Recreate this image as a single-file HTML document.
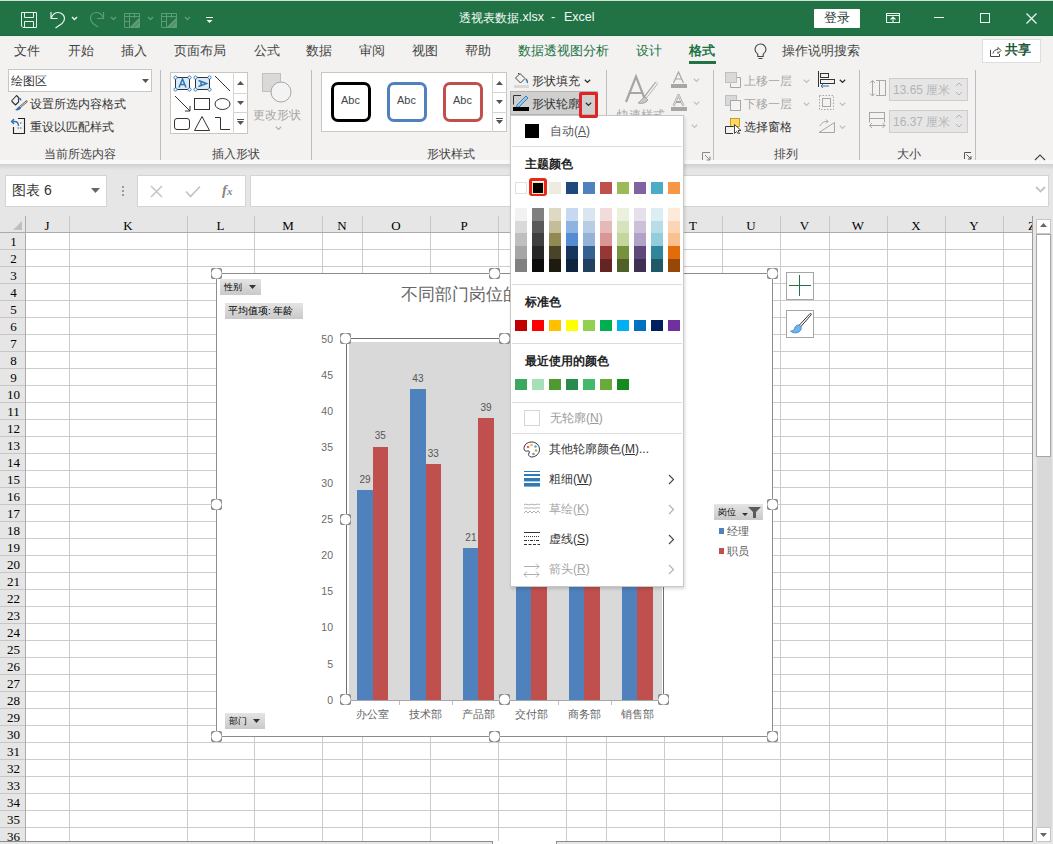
<!DOCTYPE html>
<html><head><meta charset="utf-8"><title>Excel</title><style>*{margin:0;padding:0;box-sizing:border-box}
html,body{width:1053px;height:844px;overflow:hidden}
body{position:relative;font-family:"Liberation Sans",sans-serif;background:#fff}
.a{position:absolute}
.t{white-space:nowrap;line-height:1.2}
.hd{height:16px;text-align:center;font-family:"Liberation Serif",serif;font-size:13px;line-height:12px;color:#000}
.rh{width:25px;height:14px;text-align:center;font-family:"Liberation Serif",serif;font-size:13px;line-height:14px;color:#000}
.yl{width:33px;text-align:right;font-size:10.5px;line-height:12px;color:#6a6a6a}
.dl{width:30px;text-align:center;font-size:10px;line-height:12px;color:#555}
.xl{width:52px;text-align:center;font-size:10.5px;line-height:12px;color:#666;white-space:nowrap}
</style></head><body>
<div class="a" style="left:0px;top:0px;width:1053px;height:1px;background:#cfe3d6"></div>
<div class="a" style="left:0px;top:1px;width:1053px;height:35px;background:#217346"></div>
<div class="a" style="left:0px;top:35px;width:1053px;height:1px;background:#1d6a3f"></div>
<svg class="a" style="left:21px;top:12px;" width="16" height="16" viewBox="0 0 16 16"><path d="M0.5 0.5H15.5V15.5H2L0.5 14Z M3.5 0.5V5.5H12.5V0.5 M3.5 15.5V9.5H12.5V15.5" fill="none" stroke="#eaf5ee" stroke-width="1"/></svg>
<svg class="a" style="left:49px;top:11px;" width="18" height="18" viewBox="0 0 18 18"><path d="M2 1V7.5H8.5 M2.5 6.5C4 3 6.5 1.5 9 1.5C12.5 1.5 15.5 4 15.5 7.5C15.5 9.5 14.5 11 13 12.5L6.5 17" fill="none" stroke="#eaf5ee" stroke-width="1.2"/></svg>
<svg class="a" style="left:71px;top:16px;" width="8" height="5" viewBox="0 0 8 5"><path d="M1 1L3.5 3.5L6 1" fill="none" stroke="#eaf5ee" stroke-width="1.4"/></svg>
<svg class="a" style="left:88px;top:11px;" width="18" height="18" viewBox="0 0 18 18"><path d="M15.5 1V7.5H9 M15 6.5C13.5 3 11 1.5 8.5 1.5C5 1.5 2.5 4 2.5 7.5C2.5 9.5 3.5 11 5 12.5L10 16" fill="none" stroke="#5e9c78" stroke-width="1.2"/></svg>
<svg class="a" style="left:110px;top:16px;" width="8" height="5" viewBox="0 0 8 5"><path d="M1 1L3.5 3.5L6 1" fill="none" stroke="#5e9c78" stroke-width="1.4"/></svg>
<svg class="a" style="left:124px;top:12px;" width="17" height="17" viewBox="0 0 17 17"><path d="M0.5 1.5H15.5V15.5H0.5Z M0.5 4.5H15.5 M0.5 9.5H5.5 M5.5 1.5V15.5 M10.5 1.5V6" fill="none" stroke="#5e9c78" stroke-width="1"/><path d="M6 15L15 6V15Z" fill="#5e9c78"/><path d="M7.5 13.5L13.5 7.5 M10 15L15 10" stroke="#3f8a5e" stroke-width="1"/></svg>
<svg class="a" style="left:147px;top:16px;" width="8" height="5" viewBox="0 0 8 5"><path d="M1 1L3.5 3.5L6 1" fill="none" stroke="#5e9c78" stroke-width="1.4"/></svg>
<svg class="a" style="left:161px;top:12px;" width="17" height="17" viewBox="0 0 17 17"><path d="M0.5 1.5H15.5V15.5H0.5Z M0.5 4.5H15.5 M0.5 9.5H5.5 M5.5 1.5V15.5 M10.5 1.5V6" fill="none" stroke="#5e9c78" stroke-width="1"/><path d="M6 15L15 6V15Z" fill="#5e9c78"/><path d="M7.5 13.5L13.5 7.5 M10 15L15 10" stroke="#3f8a5e" stroke-width="1"/></svg>
<svg class="a" style="left:184px;top:16px;" width="8" height="5" viewBox="0 0 8 5"><path d="M1 1L3.5 3.5L6 1" fill="none" stroke="#5e9c78" stroke-width="1.4"/></svg>
<svg class="a" style="left:206px;top:16px;" width="8" height="8" viewBox="0 0 8 8"><path d="M0 1.5H7" stroke="#eaf5ee" stroke-width="1"/><path d="M0.5 4H6.5L3.5 7Z" fill="#eaf5ee"/></svg>
<div class="a t" style="left:459px;top:11px;font-size:12px;color:#f4faf6;">透视表数据</div>
<div class="a t" style="left:519px;top:10px;font-size:12.5px;color:#f4faf6;">.xlsx</div>
<div class="a t" style="left:551px;top:10px;font-size:12.5px;color:#f4faf6;">-</div>
<div class="a t" style="left:564px;top:10px;font-size:12.5px;color:#f4faf6;">Excel</div>
<div class="a" style="left:814px;top:9px;width:46px;height:19px;background:#fff;border-radius:1px"></div>
<div class="a t" style="left:824px;top:10px;font-size:13px;color:#2b3d33;">登录</div>
<svg class="a" style="left:886px;top:12px;" width="14" height="12" viewBox="0 0 14 12"><path d="M0.5 1.5H13.5V10.5H0.5Z M0.5 3.5H13.5" fill="none" stroke="#eaf5ee" stroke-width="1.1"/><path d="M7 10V5 M4.5 7.5L7 5L9.5 7.5" fill="none" stroke="#eaf5ee" stroke-width="1.1"/></svg>
<div class="a" style="left:934px;top:17px;width:10px;height:1px;background:#eaf5ee"></div>
<svg class="a" style="left:980px;top:13px;" width="11" height="11" viewBox="0 0 11 11"><rect x="0.5" y="0.5" width="9" height="9" fill="none" stroke="#eaf5ee"/></svg>
<svg class="a" style="left:1026px;top:13px;" width="11" height="11" viewBox="0 0 11 11"><path d="M0.5 0.5L10.5 10.5 M10.5 0.5L0.5 10.5" stroke="#eaf5ee" stroke-width="1.25"/></svg>
<div class="a" style="left:0px;top:36px;width:1053px;height:125px;background:#f3f2f1"></div>
<div class="a" style="left:0px;top:36px;width:1053px;height:1px;background:#e8f2ec"></div>
<div class="a" style="left:0px;top:160px;width:1053px;height:4px;background:#f8f8f8"></div>
<div class="a t" style="left:14px;top:43px;font-size:13px;color:#444;">文件</div>
<div class="a t" style="left:68px;top:43px;font-size:13px;color:#444;">开始</div>
<div class="a t" style="left:121px;top:43px;font-size:13px;color:#444;">插入</div>
<div class="a t" style="left:174px;top:43px;font-size:13px;color:#444;">页面布局</div>
<div class="a t" style="left:254px;top:43px;font-size:13px;color:#444;">公式</div>
<div class="a t" style="left:306px;top:43px;font-size:13px;color:#444;">数据</div>
<div class="a t" style="left:359px;top:43px;font-size:13px;color:#444;">审阅</div>
<div class="a t" style="left:412px;top:43px;font-size:13px;color:#444;">视图</div>
<div class="a t" style="left:465px;top:43px;font-size:13px;color:#444;">帮助</div>
<div class="a t" style="left:518px;top:43px;font-size:13px;color:#217346;">数据透视图分析</div>
<div class="a t" style="left:636px;top:43px;font-size:13px;color:#217346;">设计</div>
<div class="a t" style="left:689px;top:43px;font-size:13px;color:#217346;font-weight:bold">格式</div>
<div class="a" style="left:689px;top:61px;width:27px;height:3px;background:#217346"></div>
<svg class="a" style="left:754px;top:43px;" width="13" height="17" viewBox="0 0 13 17"><path d="M6.5 1C3.5 1 1 3.4 1 6.5C1 8.5 2.2 9.8 3.8 11.2V13.5H9.2V11.2C10.8 9.8 12 8.5 12 6.5C12 3.4 9.5 1 6.5 1Z M4.5 15.5H8.5" fill="none" stroke="#444" stroke-width="1.1"/></svg>
<div class="a t" style="left:782px;top:43px;font-size:13px;color:#444;">操作说明搜索</div>
<div class="a" style="left:982px;top:39px;width:59px;height:24px;background:#fff;border:1px solid #dedede"></div>
<svg class="a" style="left:990px;top:46px;" width="12" height="11" viewBox="0 0 12 11"><path d="M0.5 4V10.5H9.5V8 M3 7.5C3.5 4.5 5.5 3.5 8 3.5V1.5L11 4.5L8 7.5V5.5" fill="none" stroke="#444" stroke-width="1"/></svg>
<div class="a t" style="left:1005px;top:42px;font-size:13px;color:#24573a;font-weight:bold">共享</div>
<div class="a" style="left:8px;top:69px;width:144px;height:23px;background:#fff;border:1px solid #c6c6c6"></div>
<div class="a t" style="left:11px;top:74px;font-size:12px;color:#333;">绘图区</div>
<svg class="a" style="left:142px;top:79px;" width="7" height="4" viewBox="0 0 7 4"><path d="M0 0H7L3.5 4Z" fill="#555"/></svg>
<svg class="a" style="left:9px;top:94px;" width="20" height="18" viewBox="0 0 20 18"><path d="M2.5 7L7.5 1.5L9.5 3.5V8 M2.5 7L6.5 11L10 7.5" fill="none" stroke="#333" stroke-width="1.1" stroke-linejoin="round"/><path d="M9.5 5C10.5 4 12 4.5 11.5 6.5" fill="none" stroke="#2e75b6" stroke-width="1.6"/><path d="M17.5 7.5L10.5 13.5" stroke="#555" stroke-width="2.2" stroke-linecap="round"/><path d="M17.5 7.5L10.5 13.5" stroke="#fff" stroke-width="0.8"/><path d="M10.5 12.5C8.5 13 8 15 6 16C8.5 17 11 16 12 14Z" fill="#2e75b6"/></svg>
<div class="a t" style="left:30px;top:97px;font-size:12px;color:#333;">设置所选内容格式</div>
<svg class="a" style="left:9px;top:117px;" width="20" height="18" viewBox="0 0 20 18"><path d="M9 1.5H15.5V16.5H4.5V10" fill="none" stroke="#222" stroke-width="1.1"/><path d="M11 6H12.5 M8.5 11H10 M11 11H12.5" stroke="#555" stroke-width="1"/><path d="M9.5 9C9.5 6 8 4.5 5.5 4.5H2.5 M5 2L2.5 4.5L5 7" fill="none" stroke="#2e75b6" stroke-width="1.3"/></svg>
<div class="a t" style="left:30px;top:120px;font-size:12px;color:#333;">重设以匹配样式</div>
<div class="a t" style="left:44px;top:147px;font-size:12px;color:#444;">当前所选内容</div>
<div class="a" style="left:160px;top:70px;width:1px;height:90px;background:#bdbdbd"></div>
<div class="a" style="left:170px;top:72px;width:78px;height:62px;background:#fff;border:1px solid #c6c6c6"></div>
<div class="a" style="left:233px;top:72px;width:1px;height:62px;background:#d4d4d4"></div>
<div class="a" style="left:233px;top:93px;width:15px;height:1px;background:#d4d4d4"></div>
<div class="a" style="left:233px;top:112px;width:15px;height:1px;background:#d4d4d4"></div>
<svg class="a" style="left:237px;top:81px;" width="7" height="4" viewBox="0 0 7 4"><path d="M0 4H7L3.5 0Z" fill="#555"/></svg>
<svg class="a" style="left:237px;top:101px;" width="7" height="4" viewBox="0 0 7 4"><path d="M0 0H7L3.5 4Z" fill="#555"/></svg>
<svg class="a" style="left:237px;top:119px;" width="7" height="6" viewBox="0 0 7 6"><path d="M0 0.5H7" stroke="#555"/><path d="M0 2H7L3.5 6Z" fill="#555"/></svg>
<svg class="a" style="left:170px;top:68px;" width="64" height="66" viewBox="0 0 64 66"><rect x="5.5" y="9.5" width="14" height="12" fill="#dcebf7" stroke="#333"/><circle cx="5.5" cy="9.5" r="1.6" fill="#fff" stroke="#2e75b6" stroke-width="0.9"/><circle cx="19.5" cy="9.5" r="1.6" fill="#fff" stroke="#2e75b6" stroke-width="0.9"/><circle cx="5.5" cy="21.5" r="1.6" fill="#fff" stroke="#2e75b6" stroke-width="0.9"/><circle cx="19.5" cy="21.5" r="1.6" fill="#fff" stroke="#2e75b6" stroke-width="0.9"/><path d="M9 19.5L12.5 11L16 19.5 M10.2 16.5H14.8" fill="none" stroke="#2e75b6" stroke-width="1.5"/><rect x="25.5" y="9.5" width="14" height="12" fill="#dcebf7" stroke="#333"/><circle cx="25.5" cy="9.5" r="1.6" fill="#fff" stroke="#2e75b6" stroke-width="0.9"/><circle cx="39.5" cy="9.5" r="1.6" fill="#fff" stroke="#2e75b6" stroke-width="0.9"/><circle cx="25.5" cy="21.5" r="1.6" fill="#fff" stroke="#2e75b6" stroke-width="0.9"/><circle cx="39.5" cy="21.5" r="1.6" fill="#fff" stroke="#2e75b6" stroke-width="0.9"/><path d="M28.5 12.5L36.5 15.5L28.5 18.5 M31 13.5V17.5" fill="none" stroke="#2e75b6" stroke-width="1.5"/><path d="M45 8L60 23" stroke="#333" stroke-width="1"/><path d="M5 28L20 43 M20 43V38 M20 43H15" fill="none" stroke="#333" stroke-width="1"/><rect x="24.5" y="30.5" width="15" height="11" fill="none" stroke="#333"/><ellipse cx="52.5" cy="36" rx="7.5" ry="5.5" fill="none" stroke="#333"/><rect x="4.5" y="50.5" width="15" height="11" rx="2.5" fill="none" stroke="#333"/><path d="M32 48.5L39.5 62.5H24.5Z" fill="none" stroke="#333"/><path d="M45 49.5H50.5V61.5H60" fill="none" stroke="#333"/></svg>
<svg class="a" style="left:262px;top:73px;" width="30" height="32" viewBox="0 0 30 32"><rect x="0.5" y="0.5" width="18" height="18" fill="#d9d9d9" stroke="#bfbfbf"/><circle cx="19" cy="19" r="10" fill="#f3f3f3" stroke="#a6a6a6"/></svg>
<div class="a t" style="left:253px;top:108px;font-size:12px;color:#a6a6a6;">更改形状</div>
<svg class="a" style="left:275px;top:126px;" width="7" height="4" viewBox="0 0 7 4"><path d="M0.8 0.8L3.5 3.4L6.2 0.8" fill="none" stroke="#b0b0b0" stroke-width="1.2"/></svg>
<div class="a t" style="left:212px;top:147px;font-size:12px;color:#444;">插入形状</div>
<div class="a" style="left:311px;top:70px;width:1px;height:90px;background:#bdbdbd"></div>
<div class="a" style="left:321px;top:72px;width:186px;height:60px;background:#fff;border:1px solid #c6c6c6"></div>
<div class="a" style="left:492px;top:72px;width:1px;height:60px;background:#d4d4d4"></div>
<div class="a" style="left:492px;top:92px;width:15px;height:1px;background:#d4d4d4"></div>
<div class="a" style="left:492px;top:112px;width:15px;height:1px;background:#d4d4d4"></div>
<svg class="a" style="left:496px;top:81px;" width="7" height="4" viewBox="0 0 7 4"><path d="M0 4H7L3.5 0Z" fill="#555"/></svg>
<svg class="a" style="left:496px;top:100px;" width="7" height="4" viewBox="0 0 7 4"><path d="M0 0H7L3.5 4Z" fill="#555"/></svg>
<svg class="a" style="left:496px;top:118px;" width="7" height="6" viewBox="0 0 7 6"><path d="M0 0.5H7" stroke="#555"/><path d="M0 2H7L3.5 6Z" fill="#555"/></svg>
<div class="a" style="left:331px;top:82px;width:40px;height:40px;border:3px solid #000;border-radius:7px;background:#fff"></div>
<div class="a t" style="left:341px;top:94px;font-size:11px;color:#444;">Abc</div>
<div class="a" style="left:387px;top:82px;width:40px;height:40px;border:3px solid #4f81bd;border-radius:7px;background:#fff"></div>
<div class="a t" style="left:397px;top:94px;font-size:11px;color:#444;">Abc</div>
<div class="a" style="left:443px;top:82px;width:40px;height:40px;border:3px solid #c0504d;border-radius:7px;background:#fff"></div>
<div class="a t" style="left:453px;top:94px;font-size:11px;color:#444;">Abc</div>
<div class="a t" style="left:427px;top:147px;font-size:12px;color:#444;">形状样式</div>
<div class="a" style="left:606px;top:70px;width:1px;height:90px;background:#bdbdbd"></div>
<svg class="a" style="left:514px;top:72px;" width="16" height="16" viewBox="0 0 16 16"><path d="M6 1.5L1.5 6L6.5 11L11 6.5Z" fill="none" stroke="#444"/><path d="M4 1L5.5 2.5" stroke="#444"/><path d="M12 7C13 8.5 14 10 13 11" fill="none" stroke="#2e75b6" stroke-width="1.4"/><rect x="0" y="13" width="15" height="3" fill="#d9d9d9"/></svg>
<div class="a t" style="left:532px;top:74px;font-size:12px;color:#333;">形状填充</div>
<svg class="a" style="left:584px;top:79px;" width="7" height="4" viewBox="0 0 7 4"><path d="M0.8 0.8L3.5 3.4L6.2 0.8" fill="none" stroke="#333" stroke-width="1.3"/></svg>
<div class="a" style="left:510px;top:91px;width:88px;height:24px;background:#cfcfcf;border:1px solid #b4b4b4"></div>
<svg class="a" style="left:512px;top:94px;" width="18" height="18" viewBox="0 0 18 18"><path d="M1.5 10.5V1.5H9" fill="none" stroke="#333"/><path d="M5 11L14 2L16 4L7 13L4.5 13.5Z" fill="#9cc8ee" stroke="#2e75b6" stroke-width="0.9"/><rect x="1" y="13" width="16" height="4" fill="#000"/></svg>
<div class="a t" style="left:532px;top:97px;font-size:12px;color:#333;">形状轮廓</div>
<svg class="a" style="left:585px;top:102px;" width="7" height="4" viewBox="0 0 7 4"><path d="M0.8 0.8L3.5 3.4L6.2 0.8" fill="none" stroke="#333" stroke-width="1.3"/></svg>
<svg class="a" style="left:622px;top:73px;" width="40" height="34" viewBox="0 0 40 34"><path d="M4 29L14 3.5L24 29 M8 20H20" fill="none" stroke="#a6a6a6" stroke-width="2.2"/><path d="M22 26L34 10.5" stroke="#a6a6a6" stroke-width="3.5" stroke-linecap="round"/><path d="M35 9.5L24 24" stroke="#f3f3f3" stroke-width="1.5"/><path d="M23 24C20 25 19 28 16 30C20 31 24 30 26 27Z" fill="#c8c8c8" stroke="#a6a6a6"/></svg>
<div class="a t" style="left:617px;top:108px;font-size:12px;color:#a6a6a6;">快速样式</div>
<svg class="a" style="left:671px;top:71px;" width="17" height="18" viewBox="0 0 17 18"><path d="M2.5 12L7.5 1L12.5 12 M4.5 8H10.5" fill="none" stroke="#a6a6a6" stroke-width="1.2"/><rect x="0" y="13" width="16" height="4" fill="#a6a6a6"/></svg>
<svg class="a" style="left:693px;top:78px;" width="8" height="5" viewBox="0 0 8 5"><path d="M0.8 0.8L3.5 3.4L6.2 0.8" fill="none" stroke="#c0c0c0" stroke-width="1.2"/></svg>
<svg class="a" style="left:671px;top:94px;" width="17" height="18" viewBox="0 0 17 18"><path d="M2.5 12L7.5 1L12.5 12 M4.5 8H10.5" fill="none" stroke="#a6a6a6" stroke-width="2.2"/><path d="M2.5 12L7.5 1L12.5 12" fill="none" stroke="#f3f3f3" stroke-width="0.8"/><rect x="0" y="13" width="16" height="4" fill="#a6a6a6"/></svg>
<svg class="a" style="left:693px;top:101px;" width="8" height="5" viewBox="0 0 8 5"><path d="M0.8 0.8L3.5 3.4L6.2 0.8" fill="none" stroke="#c0c0c0" stroke-width="1.2"/></svg>
<svg class="a" style="left:691px;top:124px;" width="8" height="5" viewBox="0 0 8 5"><path d="M0.8 0.8L3.5 3.4L6.2 0.8" fill="none" stroke="#c0c0c0" stroke-width="1.2"/></svg>
<svg class="a" style="left:702px;top:152px;" width="9" height="9" viewBox="0 0 9 9"><path d="M0.5 8V0.5H8" fill="none" stroke="#888"/><path d="M3 3L8 8 M8 4.5V8H4.5" fill="none" stroke="#888"/></svg>
<div class="a" style="left:713px;top:70px;width:1px;height:90px;background:#bdbdbd"></div>
<svg class="a" style="left:725px;top:72px;" width="17" height="16" viewBox="0 0 17 16"><rect x="0.5" y="0.5" width="11" height="10" fill="#d9d9d9" stroke="#bfbfbf"/><path d="M12 5.5H15.5V15.5H5.5V11.5" fill="none" stroke="#a6a6a6"/></svg>
<div class="a t" style="left:744px;top:74px;font-size:12px;color:#a6a6a6;">上移一层</div>
<svg class="a" style="left:803px;top:79px;" width="7" height="4" viewBox="0 0 7 4"><path d="M0.8 0.8L3.5 3.4L6.2 0.8" fill="none" stroke="#c0c0c0" stroke-width="1.2"/></svg>
<svg class="a" style="left:725px;top:95px;" width="17" height="16" viewBox="0 0 17 16"><rect x="0.5" y="0.5" width="11" height="10" fill="#d9d9d9" stroke="#bfbfbf"/><rect x="5.5" y="5.5" width="10" height="10" fill="#f3f3f3" stroke="#a6a6a6"/></svg>
<div class="a t" style="left:744px;top:97px;font-size:12px;color:#a6a6a6;">下移一层</div>
<svg class="a" style="left:803px;top:102px;" width="7" height="4" viewBox="0 0 7 4"><path d="M0.8 0.8L3.5 3.4L6.2 0.8" fill="none" stroke="#c0c0c0" stroke-width="1.2"/></svg>
<svg class="a" style="left:725px;top:118px;" width="18" height="16" viewBox="0 0 18 16"><rect x="5.5" y="0.5" width="9" height="8" fill="#ffd966" stroke="#bf9000" stroke-width="0.8"/><path d="M8.5 8.5H0.5V15.5H8" fill="none" stroke="#333"/><path d="M9.5 6.5V15.5L11.5 13.5L13.5 16L14.5 15.5L13 12.5H16Z" fill="#fff" stroke="#333" stroke-width="0.9"/></svg>
<div class="a t" style="left:744px;top:120px;font-size:12px;color:#333;">选择窗格</div>
<svg class="a" style="left:818px;top:71px;" width="18" height="17" viewBox="0 0 18 17"><path d="M0.5 0V16" stroke="#333"/><rect x="2.5" y="2.5" width="8" height="4" fill="none" stroke="#333"/><rect x="2.5" y="8.5" width="14" height="4" fill="none" stroke="#333"/><path d="M3 15H11 M3 15L5 13 M3 15L5 17" fill="none" stroke="#2e75b6"/></svg>
<svg class="a" style="left:839px;top:79px;" width="7" height="4" viewBox="0 0 7 4"><path d="M0.8 0.8L3.5 3.4L6.2 0.8" fill="none" stroke="#333" stroke-width="1.3"/></svg>
<svg class="a" style="left:818px;top:94px;" width="18" height="17" viewBox="0 0 18 17"><path d="M1.5 1.5H15.5V15.5H1.5Z" fill="none" stroke="#a6a6a6" stroke-dasharray="1.5 1.5"/><rect x="4.5" y="4.5" width="8" height="8" fill="none" stroke="#a6a6a6"/></svg>
<svg class="a" style="left:839px;top:102px;" width="7" height="4" viewBox="0 0 7 4"><path d="M0.8 0.8L3.5 3.4L6.2 0.8" fill="none" stroke="#c0c0c0" stroke-width="1.2"/></svg>
<svg class="a" style="left:818px;top:117px;" width="18" height="17" viewBox="0 0 18 17"><path d="M1 15.5H16.5V5.5Z" fill="none" stroke="#a6a6a6"/><path d="M2 9C4 5 7 4 10 4.5 M10 4.5L8 2.5 M10 4.5L8 6.5" fill="none" stroke="#a6a6a6"/></svg>
<svg class="a" style="left:839px;top:125px;" width="7" height="4" viewBox="0 0 7 4"><path d="M0.8 0.8L3.5 3.4L6.2 0.8" fill="none" stroke="#c0c0c0" stroke-width="1.2"/></svg>
<div class="a t" style="left:774px;top:147px;font-size:12px;color:#444;">排列</div>
<div class="a" style="left:859px;top:70px;width:1px;height:90px;background:#bdbdbd"></div>
<svg class="a" style="left:869px;top:80px;" width="18" height="17" viewBox="0 0 18 17"><path d="M3.5 0.5V16 M1 3L3.5 0.5L6 3 M1 13.5L3.5 16L6 13.5" fill="none" stroke="#a6a6a6"/><path d="M7 0.5H10.5 M7 15.5H10.5" stroke="#a6a6a6"/><rect x="10.5" y="0.5" width="6" height="15" fill="none" stroke="#a6a6a6"/></svg>
<div class="a" style="left:889px;top:78px;width:79px;height:23px;background:#e6e6e6;border:1px solid #cdcdcd"></div>
<div class="a t" style="left:893px;top:83px;font-size:12px;color:#b4b4b4;">13.65 厘米</div>
<svg class="a" style="left:955px;top:82px;" width="8" height="15" viewBox="0 0 8 15"><path d="M1 4L4 1L7 4 M1 10L4 13L7 10" fill="none" stroke="#b4b4b4"/></svg>
<svg class="a" style="left:869px;top:112px;" width="18" height="17" viewBox="0 0 18 17"><rect x="0.5" y="0.5" width="15" height="6" fill="none" stroke="#a6a6a6"/><path d="M0.5 7V10.5 M15.5 7V10.5" stroke="#a6a6a6"/><path d="M0.5 13.5H16 M3 11L0.5 13.5L3 16 M13.5 11L16 13.5L13.5 16" fill="none" stroke="#a6a6a6"/></svg>
<div class="a" style="left:889px;top:110px;width:79px;height:23px;background:#e6e6e6;border:1px solid #cdcdcd"></div>
<div class="a t" style="left:893px;top:115px;font-size:12px;color:#b4b4b4;">16.37 厘米</div>
<svg class="a" style="left:955px;top:114px;" width="8" height="15" viewBox="0 0 8 15"><path d="M1 4L4 1L7 4 M1 10L4 13L7 10" fill="none" stroke="#b4b4b4"/></svg>
<div class="a t" style="left:897px;top:147px;font-size:12px;color:#444;">大小</div>
<svg class="a" style="left:964px;top:152px;" width="8" height="8" viewBox="0 0 8 8"><path d="M0.5 7V0.5H7" fill="none" stroke="#555"/><path d="M2.5 2.5L7 7 M7 4V7H4" fill="none" stroke="#555"/></svg>
<div class="a" style="left:975px;top:70px;width:1px;height:90px;background:#bdbdbd"></div>
<svg class="a" style="left:1034px;top:154px;" width="12" height="7" viewBox="0 0 12 7"><path d="M1 6L6 1L11 6" fill="none" stroke="#444" stroke-width="1.1"/></svg>
<div class="a" style="left:0px;top:164px;width:1053px;height:52px;background:#e6e6e6"></div>
<div class="a" style="left:0px;top:164px;width:1053px;height:6px;background:linear-gradient(#d0d0d0,#e6e6e6)"></div>
<div class="a" style="left:5px;top:175px;width:102px;height:32px;background:#fff;border:1px solid #d4d4d4"></div>
<div class="a t" style="left:12px;top:182px;font-size:14px;color:#333;">图表 6</div>
<svg class="a" style="left:91px;top:188px;" width="9" height="5" viewBox="0 0 9 5"><path d="M0 0H9L4.5 5Z" fill="#666"/></svg>
<div class="a" style="left:122px;top:186px;width:2px;height:2px;background:#9a9a9a"></div>
<div class="a" style="left:122px;top:190px;width:2px;height:2px;background:#9a9a9a"></div>
<div class="a" style="left:122px;top:194px;width:2px;height:2px;background:#9a9a9a"></div>
<div class="a" style="left:137px;top:175px;width:109px;height:32px;background:#fff;border:1px solid #d4d4d4"></div>
<svg class="a" style="left:150px;top:185px;" width="13" height="13" viewBox="0 0 13 13"><path d="M1 1L12 12 M12 1L1 12" stroke="#c4c4c4" stroke-width="1.5"/></svg>
<svg class="a" style="left:185px;top:185px;" width="16" height="13" viewBox="0 0 16 13"><path d="M1 6.5L5.5 11.5L15 1.5" fill="none" stroke="#c4c4c4" stroke-width="1.8"/></svg>
<div class="a t" style="left:222px;top:181px;font-size:15px;color:#888;font-family:'Liberation Serif',serif;font-weight:bold"><i>f</i><span style="font-size:11px"><i>x</i></span></div>
<div class="a" style="left:250px;top:175px;width:799px;height:32px;background:#fff;border:1px solid #d4d4d4"></div>
<svg class="a" style="left:1035px;top:186px;" width="11" height="7" viewBox="0 0 11 7"><path d="M1 1L5.5 5.5L10 1" fill="none" stroke="#c4c4c4" stroke-width="1.8"/></svg>
<div class="a" style="left:0px;top:216px;width:1035px;height:17px;background:#e6e6e6"></div>
<div class="a" style="left:0px;top:232px;width:1033px;height:1px;background:#ababab"></div>
<svg class="a" style="left:13px;top:221px;" width="9" height="9" viewBox="0 0 9 9"><path d="M9 0V9H0Z" fill="#bfbfbf"/></svg>
<div class="a" style="left:25px;top:216px;width:1px;height:16px;background:#ababab"></div>
<div class="a" style="left:69px;top:216px;width:1px;height:16px;background:#c6c6c6"></div>
<div class="a" style="left:187px;top:216px;width:1px;height:16px;background:#c6c6c6"></div>
<div class="a" style="left:254px;top:216px;width:1px;height:16px;background:#c6c6c6"></div>
<div class="a" style="left:322px;top:216px;width:1px;height:16px;background:#c6c6c6"></div>
<div class="a" style="left:362px;top:216px;width:1px;height:16px;background:#c6c6c6"></div>
<div class="a" style="left:430px;top:216px;width:1px;height:16px;background:#c6c6c6"></div>
<div class="a" style="left:498px;top:216px;width:1px;height:16px;background:#c6c6c6"></div>
<div class="a" style="left:566px;top:216px;width:1px;height:16px;background:#c6c6c6"></div>
<div class="a" style="left:606px;top:216px;width:1px;height:16px;background:#c6c6c6"></div>
<div class="a" style="left:664px;top:216px;width:1px;height:16px;background:#c6c6c6"></div>
<div class="a" style="left:722px;top:216px;width:1px;height:16px;background:#c6c6c6"></div>
<div class="a" style="left:780px;top:216px;width:1px;height:16px;background:#c6c6c6"></div>
<div class="a" style="left:829px;top:216px;width:1px;height:16px;background:#c6c6c6"></div>
<div class="a" style="left:887px;top:216px;width:1px;height:16px;background:#c6c6c6"></div>
<div class="a" style="left:945px;top:216px;width:1px;height:16px;background:#c6c6c6"></div>
<div class="a" style="left:1003px;top:216px;width:1px;height:16px;background:#c6c6c6"></div>
<div class="a" style="left:1032px;top:216px;width:1px;height:16px;background:#c6c6c6"></div>
<div class="a hd" style="left:25px;top:220px;width:44px">J</div>
<div class="a hd" style="left:69px;top:220px;width:118px">K</div>
<div class="a hd" style="left:187px;top:220px;width:67px">L</div>
<div class="a hd" style="left:254px;top:220px;width:68px">M</div>
<div class="a hd" style="left:322px;top:220px;width:40px">N</div>
<div class="a hd" style="left:362px;top:220px;width:68px">O</div>
<div class="a hd" style="left:430px;top:220px;width:68px">P</div>
<div class="a hd" style="left:498px;top:220px;width:68px">Q</div>
<div class="a hd" style="left:566px;top:220px;width:40px">R</div>
<div class="a hd" style="left:606px;top:220px;width:58px">S</div>
<div class="a hd" style="left:664px;top:220px;width:58px">T</div>
<div class="a hd" style="left:722px;top:220px;width:58px">U</div>
<div class="a hd" style="left:780px;top:220px;width:49px">V</div>
<div class="a hd" style="left:829px;top:220px;width:58px">W</div>
<div class="a hd" style="left:887px;top:220px;width:58px">X</div>
<div class="a hd" style="left:945px;top:220px;width:58px">Y</div>
<div class="a hd" style="left:1003px;top:220px;width:58px">Z</div>
<div class="a" style="left:0px;top:233px;width:25px;height:608px;background:#e6e6e6"></div>
<div class="a" style="left:25px;top:216px;width:1px;height:625px;background:#ababab"></div>
<div class="a" style="left:0px;top:249px;width:25px;height:1px;background:#c6c6c6"></div>
<div class="a rh" style="left:1px;top:235px">1</div>
<div class="a" style="left:0px;top:266px;width:25px;height:1px;background:#c6c6c6"></div>
<div class="a rh" style="left:1px;top:252px">2</div>
<div class="a" style="left:0px;top:283px;width:25px;height:1px;background:#c6c6c6"></div>
<div class="a rh" style="left:1px;top:269px">3</div>
<div class="a" style="left:0px;top:300px;width:25px;height:1px;background:#c6c6c6"></div>
<div class="a rh" style="left:1px;top:286px">4</div>
<div class="a" style="left:0px;top:317px;width:25px;height:1px;background:#c6c6c6"></div>
<div class="a rh" style="left:1px;top:303px">5</div>
<div class="a" style="left:0px;top:334px;width:25px;height:1px;background:#c6c6c6"></div>
<div class="a rh" style="left:1px;top:320px">6</div>
<div class="a" style="left:0px;top:351px;width:25px;height:1px;background:#c6c6c6"></div>
<div class="a rh" style="left:1px;top:337px">7</div>
<div class="a" style="left:0px;top:368px;width:25px;height:1px;background:#c6c6c6"></div>
<div class="a rh" style="left:1px;top:354px">8</div>
<div class="a" style="left:0px;top:385px;width:25px;height:1px;background:#c6c6c6"></div>
<div class="a rh" style="left:1px;top:371px">9</div>
<div class="a" style="left:0px;top:402px;width:25px;height:1px;background:#c6c6c6"></div>
<div class="a rh" style="left:1px;top:388px">10</div>
<div class="a" style="left:0px;top:419px;width:25px;height:1px;background:#c6c6c6"></div>
<div class="a rh" style="left:1px;top:405px">11</div>
<div class="a" style="left:0px;top:436px;width:25px;height:1px;background:#c6c6c6"></div>
<div class="a rh" style="left:1px;top:422px">12</div>
<div class="a" style="left:0px;top:453px;width:25px;height:1px;background:#c6c6c6"></div>
<div class="a rh" style="left:1px;top:439px">13</div>
<div class="a" style="left:0px;top:470px;width:25px;height:1px;background:#c6c6c6"></div>
<div class="a rh" style="left:1px;top:456px">14</div>
<div class="a" style="left:0px;top:487px;width:25px;height:1px;background:#c6c6c6"></div>
<div class="a rh" style="left:1px;top:473px">15</div>
<div class="a" style="left:0px;top:504px;width:25px;height:1px;background:#c6c6c6"></div>
<div class="a rh" style="left:1px;top:490px">16</div>
<div class="a" style="left:0px;top:521px;width:25px;height:1px;background:#c6c6c6"></div>
<div class="a rh" style="left:1px;top:507px">17</div>
<div class="a" style="left:0px;top:538px;width:25px;height:1px;background:#c6c6c6"></div>
<div class="a rh" style="left:1px;top:524px">18</div>
<div class="a" style="left:0px;top:555px;width:25px;height:1px;background:#c6c6c6"></div>
<div class="a rh" style="left:1px;top:541px">19</div>
<div class="a" style="left:0px;top:572px;width:25px;height:1px;background:#c6c6c6"></div>
<div class="a rh" style="left:1px;top:558px">20</div>
<div class="a" style="left:0px;top:589px;width:25px;height:1px;background:#c6c6c6"></div>
<div class="a rh" style="left:1px;top:575px">21</div>
<div class="a" style="left:0px;top:606px;width:25px;height:1px;background:#c6c6c6"></div>
<div class="a rh" style="left:1px;top:592px">22</div>
<div class="a" style="left:0px;top:623px;width:25px;height:1px;background:#c6c6c6"></div>
<div class="a rh" style="left:1px;top:609px">23</div>
<div class="a" style="left:0px;top:640px;width:25px;height:1px;background:#c6c6c6"></div>
<div class="a rh" style="left:1px;top:626px">24</div>
<div class="a" style="left:0px;top:657px;width:25px;height:1px;background:#c6c6c6"></div>
<div class="a rh" style="left:1px;top:643px">25</div>
<div class="a" style="left:0px;top:674px;width:25px;height:1px;background:#c6c6c6"></div>
<div class="a rh" style="left:1px;top:660px">26</div>
<div class="a" style="left:0px;top:691px;width:25px;height:1px;background:#c6c6c6"></div>
<div class="a rh" style="left:1px;top:677px">27</div>
<div class="a" style="left:0px;top:708px;width:25px;height:1px;background:#c6c6c6"></div>
<div class="a rh" style="left:1px;top:694px">28</div>
<div class="a" style="left:0px;top:725px;width:25px;height:1px;background:#c6c6c6"></div>
<div class="a rh" style="left:1px;top:711px">29</div>
<div class="a" style="left:0px;top:742px;width:25px;height:1px;background:#c6c6c6"></div>
<div class="a rh" style="left:1px;top:728px">30</div>
<div class="a" style="left:0px;top:759px;width:25px;height:1px;background:#c6c6c6"></div>
<div class="a rh" style="left:1px;top:745px">31</div>
<div class="a" style="left:0px;top:776px;width:25px;height:1px;background:#c6c6c6"></div>
<div class="a rh" style="left:1px;top:762px">32</div>
<div class="a" style="left:0px;top:793px;width:25px;height:1px;background:#c6c6c6"></div>
<div class="a rh" style="left:1px;top:779px">33</div>
<div class="a" style="left:0px;top:810px;width:25px;height:1px;background:#c6c6c6"></div>
<div class="a rh" style="left:1px;top:796px">34</div>
<div class="a" style="left:0px;top:827px;width:25px;height:1px;background:#c6c6c6"></div>
<div class="a rh" style="left:1px;top:813px">35</div>
<div class="a" style="left:0px;top:844px;width:25px;height:1px;background:#c6c6c6"></div>
<div class="a rh" style="left:1px;top:830px">36</div>
<div class="a" style="left:26px;top:233px;width:1006px;height:608px;background:#fff"></div>
<div class="a" style="left:26px;top:249px;width:1006px;height:1px;background:#cccccc"></div>
<div class="a" style="left:26px;top:266px;width:1006px;height:1px;background:#cccccc"></div>
<div class="a" style="left:26px;top:283px;width:1006px;height:1px;background:#cccccc"></div>
<div class="a" style="left:26px;top:300px;width:1006px;height:1px;background:#cccccc"></div>
<div class="a" style="left:26px;top:317px;width:1006px;height:1px;background:#cccccc"></div>
<div class="a" style="left:26px;top:334px;width:1006px;height:1px;background:#cccccc"></div>
<div class="a" style="left:26px;top:351px;width:1006px;height:1px;background:#cccccc"></div>
<div class="a" style="left:26px;top:368px;width:1006px;height:1px;background:#cccccc"></div>
<div class="a" style="left:26px;top:385px;width:1006px;height:1px;background:#cccccc"></div>
<div class="a" style="left:26px;top:402px;width:1006px;height:1px;background:#cccccc"></div>
<div class="a" style="left:26px;top:419px;width:1006px;height:1px;background:#cccccc"></div>
<div class="a" style="left:26px;top:436px;width:1006px;height:1px;background:#cccccc"></div>
<div class="a" style="left:26px;top:453px;width:1006px;height:1px;background:#cccccc"></div>
<div class="a" style="left:26px;top:470px;width:1006px;height:1px;background:#cccccc"></div>
<div class="a" style="left:26px;top:487px;width:1006px;height:1px;background:#cccccc"></div>
<div class="a" style="left:26px;top:504px;width:1006px;height:1px;background:#cccccc"></div>
<div class="a" style="left:26px;top:521px;width:1006px;height:1px;background:#cccccc"></div>
<div class="a" style="left:26px;top:538px;width:1006px;height:1px;background:#cccccc"></div>
<div class="a" style="left:26px;top:555px;width:1006px;height:1px;background:#cccccc"></div>
<div class="a" style="left:26px;top:572px;width:1006px;height:1px;background:#cccccc"></div>
<div class="a" style="left:26px;top:589px;width:1006px;height:1px;background:#cccccc"></div>
<div class="a" style="left:26px;top:606px;width:1006px;height:1px;background:#cccccc"></div>
<div class="a" style="left:26px;top:623px;width:1006px;height:1px;background:#cccccc"></div>
<div class="a" style="left:26px;top:640px;width:1006px;height:1px;background:#cccccc"></div>
<div class="a" style="left:26px;top:657px;width:1006px;height:1px;background:#cccccc"></div>
<div class="a" style="left:26px;top:674px;width:1006px;height:1px;background:#cccccc"></div>
<div class="a" style="left:26px;top:691px;width:1006px;height:1px;background:#cccccc"></div>
<div class="a" style="left:26px;top:708px;width:1006px;height:1px;background:#cccccc"></div>
<div class="a" style="left:26px;top:725px;width:1006px;height:1px;background:#cccccc"></div>
<div class="a" style="left:26px;top:742px;width:1006px;height:1px;background:#cccccc"></div>
<div class="a" style="left:26px;top:759px;width:1006px;height:1px;background:#cccccc"></div>
<div class="a" style="left:26px;top:776px;width:1006px;height:1px;background:#cccccc"></div>
<div class="a" style="left:26px;top:793px;width:1006px;height:1px;background:#cccccc"></div>
<div class="a" style="left:26px;top:810px;width:1006px;height:1px;background:#cccccc"></div>
<div class="a" style="left:26px;top:827px;width:1006px;height:1px;background:#cccccc"></div>
<div class="a" style="left:69px;top:233px;width:1px;height:608px;background:#cccccc"></div>
<div class="a" style="left:187px;top:233px;width:1px;height:608px;background:#cccccc"></div>
<div class="a" style="left:254px;top:233px;width:1px;height:608px;background:#cccccc"></div>
<div class="a" style="left:322px;top:233px;width:1px;height:608px;background:#cccccc"></div>
<div class="a" style="left:362px;top:233px;width:1px;height:608px;background:#cccccc"></div>
<div class="a" style="left:430px;top:233px;width:1px;height:608px;background:#cccccc"></div>
<div class="a" style="left:498px;top:233px;width:1px;height:608px;background:#cccccc"></div>
<div class="a" style="left:566px;top:233px;width:1px;height:608px;background:#cccccc"></div>
<div class="a" style="left:606px;top:233px;width:1px;height:608px;background:#cccccc"></div>
<div class="a" style="left:664px;top:233px;width:1px;height:608px;background:#cccccc"></div>
<div class="a" style="left:722px;top:233px;width:1px;height:608px;background:#cccccc"></div>
<div class="a" style="left:780px;top:233px;width:1px;height:608px;background:#cccccc"></div>
<div class="a" style="left:829px;top:233px;width:1px;height:608px;background:#cccccc"></div>
<div class="a" style="left:887px;top:233px;width:1px;height:608px;background:#cccccc"></div>
<div class="a" style="left:945px;top:233px;width:1px;height:608px;background:#cccccc"></div>
<div class="a" style="left:1003px;top:233px;width:1px;height:608px;background:#cccccc"></div>
<div class="a" style="left:1032px;top:216px;width:1px;height:626px;background:#9c9c9c"></div>
<div class="a" style="left:0px;top:841px;width:493px;height:3px;background:#e6e6e6;border-top:1px solid #8c8c8c;border-right:1px solid #8c8c8c"></div>
<div class="a" style="left:556px;top:841px;width:497px;height:3px;background:#e6e6e6;border-top:1px solid #8c8c8c;border-left:1px solid #8c8c8c"></div>
<div class="a" style="left:1033px;top:216px;width:20px;height:628px;background:#e6e6e6"></div>
<div class="a" style="left:1037px;top:234px;width:15px;height:593px;background:#d9d9d9"></div>
<div class="a" style="left:1036px;top:219px;width:15px;height:16px;background:#fff;border:1px solid #c6c6c6;border-bottom:2px solid #c6c6c6"></div>
<svg class="a" style="left:1040px;top:223px;" width="7" height="4" viewBox="0 0 7 4"><path d="M0 4H7L3.5 0Z" fill="#666"/></svg>
<div class="a" style="left:1036px;top:234px;width:15px;height:223px;background:#fff;border:1px solid #a6a6a6"></div>
<div class="a" style="left:1036px;top:827px;width:15px;height:15px;background:#fff;border:1px solid #c6c6c6"></div>
<svg class="a" style="left:1040px;top:833px;" width="7" height="4" viewBox="0 0 7 4"><path d="M0 0H7L3.5 4Z" fill="#666"/></svg>
<div class="a" style="left:216px;top:273px;width:557px;height:464px;background:#fff;border:1px solid #8c8c8c"></div>
<div class="a" style="left:220px;top:279px;width:41px;height:16px;background:linear-gradient(#e4e4e4,#c9c9c9);"></div><div class="a t" style="left:224px;top:281px;font-size:9px;color:#000;line-height:12px">性别</div><svg class="a" style="left:249px;top:285px;" width="8" height="5" viewBox="0 0 8 5"><path d="M0 0H7L3.5 4Z" fill="#333"/></svg>
<div class="a" style="left:225px;top:303px;width:78px;height:16px;background:linear-gradient(#e4e4e4,#c9c9c9);"></div><div class="a t" style="left:228px;top:305px;font-size:9.5px;color:#000;line-height:12px">平均值项: 年龄</div>
<div class="a" style="left:225px;top:713px;width:40px;height:16px;background:linear-gradient(#e4e4e4,#c9c9c9);"></div><div class="a t" style="left:229px;top:715px;font-size:9px;color:#000;line-height:12px">部门</div><svg class="a" style="left:253px;top:719px;" width="8" height="5" viewBox="0 0 8 5"><path d="M0 0H7L3.5 4Z" fill="#333"/></svg>
<div class="a" style="left:714px;top:504px;width:49px;height:16px;background:linear-gradient(#e4e4e4,#c9c9c9);"></div><div class="a t" style="left:718px;top:506px;font-size:9px;color:#000;line-height:12px">岗位</div><svg class="a" style="left:742px;top:513px;" width="6" height="4" viewBox="0 0 6 4"><path d="M0 0H6L3 3Z" fill="#333"/></svg><svg class="a" style="left:748px;top:507px;" width="13" height="11" viewBox="0 0 13 11"><path d="M0 0H13L8 5V11H5V5Z" fill="#5a5a5a"/></svg>
<div class="a t" style="left:401px;top:285px;font-size:16.5px;color:#666;">不同部门岗位的平均年龄</div>
<div class="a" style="left:349px;top:342px;width:313px;height:358px;background:#d9d9d9"></div>
<div class="a" style="left:346px;top:338px;width:317px;height:1px;background:#6e6e6e"></div>
<div class="a" style="left:346px;top:338px;width:1px;height:362px;background:#6e6e6e"></div>
<div class="a" style="left:663px;top:338px;width:1px;height:362px;background:#6e6e6e"></div>
<div class="a" style="left:346px;top:700px;width:317px;height:1px;background:#a6a6a6"></div>
<div class="a yl" style="left:300px;top:693.6px">0</div>
<div class="a yl" style="left:300px;top:657.5px">5</div>
<div class="a yl" style="left:300px;top:621.4px">10</div>
<div class="a yl" style="left:300px;top:585.3px">15</div>
<div class="a yl" style="left:300px;top:549.2px">20</div>
<div class="a yl" style="left:300px;top:513.1px">25</div>
<div class="a yl" style="left:300px;top:477.0px">30</div>
<div class="a yl" style="left:300px;top:440.9px">35</div>
<div class="a yl" style="left:300px;top:404.8px">40</div>
<div class="a yl" style="left:300px;top:368.7px">45</div>
<div class="a yl" style="left:300px;top:332.6px">50</div>
<div class="a" style="left:357px;top:490px;width:16px;height:210px;background:#4f81bd"></div>
<div class="a" style="left:373px;top:447px;width:15px;height:253px;background:#c0504d"></div>
<div class="a dl" style="left:350.0px;top:473.7px">29</div>
<div class="a dl" style="left:365.2px;top:430.4px">35</div>
<div class="a" style="left:410px;top:389px;width:16px;height:311px;background:#4f81bd"></div>
<div class="a" style="left:426px;top:464px;width:15px;height:236px;background:#c0504d"></div>
<div class="a dl" style="left:402.9px;top:372.6px">43</div>
<div class="a dl" style="left:418.2px;top:447.7px">33</div>
<div class="a" style="left:463px;top:548px;width:15px;height:152px;background:#4f81bd"></div>
<div class="a" style="left:478px;top:418px;width:16px;height:282px;background:#c0504d"></div>
<div class="a dl" style="left:455.9px;top:531.5px">21</div>
<div class="a dl" style="left:471.1px;top:401.5px">39</div>
<div class="a" style="left:516px;top:580px;width:15px;height:120px;background:#4f81bd"></div>
<div class="a" style="left:531px;top:483px;width:16px;height:217px;background:#c0504d"></div>
<div class="a dl" style="left:508.8px;top:564.0px">16</div>
<div class="a dl" style="left:524.1px;top:466.5px">30</div>
<div class="a" style="left:569px;top:497px;width:15px;height:203px;background:#4f81bd"></div>
<div class="a" style="left:584px;top:447px;width:16px;height:253px;background:#c0504d"></div>
<div class="a dl" style="left:561.8px;top:480.9px">28</div>
<div class="a dl" style="left:577.1px;top:430.4px">35</div>
<div class="a" style="left:622px;top:476px;width:15px;height:224px;background:#4f81bd"></div>
<div class="a" style="left:637px;top:512px;width:16px;height:188px;background:#c0504d"></div>
<div class="a dl" style="left:614.7px;top:459.3px">31</div>
<div class="a dl" style="left:630.0px;top:495.4px">26</div>
<div class="a" style="left:346px;top:701px;width:1px;height:4px;background:#bfbfbf"></div>
<div class="a" style="left:399px;top:701px;width:1px;height:4px;background:#bfbfbf"></div>
<div class="a" style="left:452px;top:701px;width:1px;height:4px;background:#bfbfbf"></div>
<div class="a" style="left:505px;top:701px;width:1px;height:4px;background:#bfbfbf"></div>
<div class="a" style="left:558px;top:701px;width:1px;height:4px;background:#bfbfbf"></div>
<div class="a" style="left:611px;top:701px;width:1px;height:4px;background:#bfbfbf"></div>
<div class="a" style="left:664px;top:701px;width:1px;height:4px;background:#bfbfbf"></div>
<div class="a xl" style="left:346.5px;top:707.5px">办公室</div>
<div class="a xl" style="left:399.5px;top:707.5px">技术部</div>
<div class="a xl" style="left:452.4px;top:707.5px">产品部</div>
<div class="a xl" style="left:505.4px;top:707.5px">交付部</div>
<div class="a xl" style="left:558.3px;top:707.5px">商务部</div>
<div class="a xl" style="left:611.3px;top:707.5px">销售部</div>
<div class="a" style="left:719px;top:528px;width:5px;height:6px;background:#4f81bd"></div>
<div class="a t" style="left:727px;top:525px;font-size:10.5px;color:#595959;line-height:12px">经理</div>
<div class="a" style="left:719px;top:548px;width:5px;height:6px;background:#c0504d"></div>
<div class="a t" style="left:727px;top:545px;font-size:10.5px;color:#595959;line-height:12px">职员</div>
<div class="a" style="left:340px;top:333px;width:11px;height:11px;background:radial-gradient(circle at 50% 50%,#fff 0,#fff 4.6px,#8a8a8a 5.4px);border-radius:2px"></div>
<div class="a" style="left:499px;top:333px;width:11px;height:11px;background:radial-gradient(circle at 50% 50%,#fff 0,#fff 4.6px,#8a8a8a 5.4px);border-radius:2px"></div>
<div class="a" style="left:658px;top:333px;width:11px;height:11px;background:radial-gradient(circle at 50% 50%,#fff 0,#fff 4.6px,#8a8a8a 5.4px);border-radius:2px"></div>
<div class="a" style="left:340px;top:514px;width:11px;height:11px;background:radial-gradient(circle at 50% 50%,#fff 0,#fff 4.6px,#8a8a8a 5.4px);border-radius:2px"></div>
<div class="a" style="left:658px;top:514px;width:11px;height:11px;background:radial-gradient(circle at 50% 50%,#fff 0,#fff 4.6px,#8a8a8a 5.4px);border-radius:2px"></div>
<div class="a" style="left:340px;top:694px;width:11px;height:11px;background:radial-gradient(circle at 50% 50%,#fff 0,#fff 4.6px,#8a8a8a 5.4px);border-radius:2px"></div>
<div class="a" style="left:499px;top:694px;width:11px;height:11px;background:radial-gradient(circle at 50% 50%,#fff 0,#fff 4.6px,#8a8a8a 5.4px);border-radius:2px"></div>
<div class="a" style="left:658px;top:694px;width:11px;height:11px;background:radial-gradient(circle at 50% 50%,#fff 0,#fff 4.6px,#8a8a8a 5.4px);border-radius:2px"></div>
<div class="a" style="left:211px;top:268px;width:11px;height:11px;background:radial-gradient(circle at 50% 50%,#fff 0,#fff 4.6px,#8a8a8a 5.4px);border-radius:2px"></div>
<div class="a" style="left:489px;top:268px;width:11px;height:11px;background:radial-gradient(circle at 50% 50%,#fff 0,#fff 4.6px,#8a8a8a 5.4px);border-radius:2px"></div>
<div class="a" style="left:767px;top:268px;width:11px;height:11px;background:radial-gradient(circle at 50% 50%,#fff 0,#fff 4.6px,#8a8a8a 5.4px);border-radius:2px"></div>
<div class="a" style="left:211px;top:499px;width:11px;height:11px;background:radial-gradient(circle at 50% 50%,#fff 0,#fff 4.6px,#8a8a8a 5.4px);border-radius:2px"></div>
<div class="a" style="left:767px;top:499px;width:11px;height:11px;background:radial-gradient(circle at 50% 50%,#fff 0,#fff 4.6px,#8a8a8a 5.4px);border-radius:2px"></div>
<div class="a" style="left:211px;top:731px;width:11px;height:11px;background:radial-gradient(circle at 50% 50%,#fff 0,#fff 4.6px,#8a8a8a 5.4px);border-radius:2px"></div>
<div class="a" style="left:489px;top:731px;width:11px;height:11px;background:radial-gradient(circle at 50% 50%,#fff 0,#fff 4.6px,#8a8a8a 5.4px);border-radius:2px"></div>
<div class="a" style="left:767px;top:731px;width:11px;height:11px;background:radial-gradient(circle at 50% 50%,#fff 0,#fff 4.6px,#8a8a8a 5.4px);border-radius:2px"></div>
<div class="a" style="left:786px;top:272px;width:28px;height:28px;background:#fff;border:1px solid #a6a6a6"></div>
<svg class="a" style="left:786px;top:272px;" width="28" height="28" viewBox="0 0 28 28"><path d="M13.5 3V24 M3 13.5H25" stroke="#217346" stroke-width="1"/></svg>
<div class="a" style="left:786px;top:310px;width:28px;height:28px;background:#fff;border:1px solid #a6a6a6"></div>
<svg class="a" style="left:786px;top:310px;" width="28" height="28" viewBox="0 0 28 28"><path d="M14.5 17L25 5C25.8 4 24.8 3 23.8 3.8L13 15.5" fill="#fff" stroke="#333" stroke-width="1"/><path d="M13.5 15C10.5 14.5 9 16.5 8.5 18.5C8 20.5 6.5 21 4.5 21C7 23.5 12 23.5 14 21C15.5 19.5 16 17 13.5 15Z" fill="#6cb4ee" stroke="#3a7fc0" stroke-width="0.8"/></svg>
<div class="a" style="left:510px;top:115px;width:174px;height:472px;background:#fff;border:1px solid #c8c8c8;box-shadow:1px 2px 3px rgba(0,0,0,0.15)"></div>
<div class="a" style="left:525px;top:124px;width:14px;height:14px;background:#000"></div>
<div class="a t" style="left:550px;top:124px;font-size:12px;color:#555;">自动(<u>A</u>)</div>
<div class="a" style="left:512px;top:146px;width:170px;height:1px;background:#dcdcdc"></div>
<div class="a t" style="left:525px;top:157px;font-size:12px;color:#222;font-weight:bold">主题颜色</div>
<div class="a" style="left:515px;top:182px;width:12px;height:12px;background:#ffffff;border:1px solid #e0e0e0;"></div>
<div class="a" style="left:515px;top:208px;width:12px;height:13px;background:#f2f2f2"></div>
<div class="a" style="left:515px;top:221px;width:12px;height:12px;background:#d9d9d9"></div>
<div class="a" style="left:515px;top:233px;width:12px;height:13px;background:#bfbfbf"></div>
<div class="a" style="left:515px;top:246px;width:12px;height:13px;background:#a6a6a6"></div>
<div class="a" style="left:515px;top:259px;width:12px;height:13px;background:#808080"></div>
<div class="a" style="left:532px;top:182px;width:12px;height:12px;background:#000000;"></div>
<div class="a" style="left:532px;top:208px;width:12px;height:13px;background:#7f7f7f"></div>
<div class="a" style="left:532px;top:221px;width:12px;height:12px;background:#595959"></div>
<div class="a" style="left:532px;top:233px;width:12px;height:13px;background:#3f3f3f"></div>
<div class="a" style="left:532px;top:246px;width:12px;height:13px;background:#262626"></div>
<div class="a" style="left:532px;top:259px;width:12px;height:13px;background:#0c0c0c"></div>
<div class="a" style="left:549px;top:182px;width:12px;height:12px;background:#eeece1;"></div>
<div class="a" style="left:549px;top:208px;width:12px;height:13px;background:#ddd9c3"></div>
<div class="a" style="left:549px;top:221px;width:12px;height:12px;background:#c4bd97"></div>
<div class="a" style="left:549px;top:233px;width:12px;height:13px;background:#938953"></div>
<div class="a" style="left:549px;top:246px;width:12px;height:13px;background:#494429"></div>
<div class="a" style="left:549px;top:259px;width:12px;height:13px;background:#1d1b10"></div>
<div class="a" style="left:566px;top:182px;width:12px;height:12px;background:#1f497d;"></div>
<div class="a" style="left:566px;top:208px;width:12px;height:13px;background:#c6d9f0"></div>
<div class="a" style="left:566px;top:221px;width:12px;height:12px;background:#8db3e2"></div>
<div class="a" style="left:566px;top:233px;width:12px;height:13px;background:#548dd4"></div>
<div class="a" style="left:566px;top:246px;width:12px;height:13px;background:#17365d"></div>
<div class="a" style="left:566px;top:259px;width:12px;height:13px;background:#0f243e"></div>
<div class="a" style="left:583px;top:182px;width:12px;height:12px;background:#4f81bd;"></div>
<div class="a" style="left:583px;top:208px;width:12px;height:13px;background:#dbe5f1"></div>
<div class="a" style="left:583px;top:221px;width:12px;height:12px;background:#b8cce4"></div>
<div class="a" style="left:583px;top:233px;width:12px;height:13px;background:#95b3d7"></div>
<div class="a" style="left:583px;top:246px;width:12px;height:13px;background:#366092"></div>
<div class="a" style="left:583px;top:259px;width:12px;height:13px;background:#244061"></div>
<div class="a" style="left:600px;top:182px;width:12px;height:12px;background:#c0504d;"></div>
<div class="a" style="left:600px;top:208px;width:12px;height:13px;background:#f2dcdb"></div>
<div class="a" style="left:600px;top:221px;width:12px;height:12px;background:#e5b9b7"></div>
<div class="a" style="left:600px;top:233px;width:12px;height:13px;background:#d99694"></div>
<div class="a" style="left:600px;top:246px;width:12px;height:13px;background:#953734"></div>
<div class="a" style="left:600px;top:259px;width:12px;height:13px;background:#632423"></div>
<div class="a" style="left:617px;top:182px;width:12px;height:12px;background:#9bbb59;"></div>
<div class="a" style="left:617px;top:208px;width:12px;height:13px;background:#ebf1dd"></div>
<div class="a" style="left:617px;top:221px;width:12px;height:12px;background:#d7e3bc"></div>
<div class="a" style="left:617px;top:233px;width:12px;height:13px;background:#c3d69b"></div>
<div class="a" style="left:617px;top:246px;width:12px;height:13px;background:#76923c"></div>
<div class="a" style="left:617px;top:259px;width:12px;height:13px;background:#4f6128"></div>
<div class="a" style="left:634px;top:182px;width:12px;height:12px;background:#8064a2;"></div>
<div class="a" style="left:634px;top:208px;width:12px;height:13px;background:#e5e0ec"></div>
<div class="a" style="left:634px;top:221px;width:12px;height:12px;background:#ccc1d9"></div>
<div class="a" style="left:634px;top:233px;width:12px;height:13px;background:#b2a2c7"></div>
<div class="a" style="left:634px;top:246px;width:12px;height:13px;background:#5f497a"></div>
<div class="a" style="left:634px;top:259px;width:12px;height:13px;background:#3f3151"></div>
<div class="a" style="left:651px;top:182px;width:12px;height:12px;background:#4bacc6;"></div>
<div class="a" style="left:651px;top:208px;width:12px;height:13px;background:#dbeef3"></div>
<div class="a" style="left:651px;top:221px;width:12px;height:12px;background:#b7dde8"></div>
<div class="a" style="left:651px;top:233px;width:12px;height:13px;background:#92cddc"></div>
<div class="a" style="left:651px;top:246px;width:12px;height:13px;background:#31859b"></div>
<div class="a" style="left:651px;top:259px;width:12px;height:13px;background:#205867"></div>
<div class="a" style="left:668px;top:182px;width:12px;height:12px;background:#f79646;"></div>
<div class="a" style="left:668px;top:208px;width:12px;height:13px;background:#fdeada"></div>
<div class="a" style="left:668px;top:221px;width:12px;height:12px;background:#fbd5b5"></div>
<div class="a" style="left:668px;top:233px;width:12px;height:13px;background:#fac08f"></div>
<div class="a" style="left:668px;top:246px;width:12px;height:13px;background:#e36c09"></div>
<div class="a" style="left:668px;top:259px;width:12px;height:13px;background:#974806"></div>
<div class="a" style="left:529px;top:178px;width:18px;height:18px;border:3px solid #e8261c;border-radius:3px"></div>
<div class="a" style="left:532px;top:182px;width:12px;height:12px;border:1px solid #ffe3a6;background:#000"></div>
<div class="a" style="left:512px;top:284px;width:170px;height:1px;background:#dcdcdc"></div>
<div class="a t" style="left:525px;top:295px;font-size:12px;color:#222;font-weight:bold">标准色</div>
<div class="a" style="left:515px;top:320px;width:12px;height:11px;background:#c00000"></div>
<div class="a" style="left:532px;top:320px;width:12px;height:11px;background:#ff0000"></div>
<div class="a" style="left:549px;top:320px;width:12px;height:11px;background:#ffc000"></div>
<div class="a" style="left:566px;top:320px;width:12px;height:11px;background:#ffff00"></div>
<div class="a" style="left:583px;top:320px;width:12px;height:11px;background:#92d050"></div>
<div class="a" style="left:600px;top:320px;width:12px;height:11px;background:#00b050"></div>
<div class="a" style="left:617px;top:320px;width:12px;height:11px;background:#00b0f0"></div>
<div class="a" style="left:634px;top:320px;width:12px;height:11px;background:#0070c0"></div>
<div class="a" style="left:651px;top:320px;width:12px;height:11px;background:#002060"></div>
<div class="a" style="left:668px;top:320px;width:12px;height:11px;background:#7030a0"></div>
<div class="a" style="left:512px;top:343px;width:170px;height:1px;background:#dcdcdc"></div>
<div class="a t" style="left:525px;top:354px;font-size:12px;color:#222;font-weight:bold">最近使用的颜色</div>
<div class="a" style="left:515px;top:379px;width:12px;height:11px;background:#3aa85e"></div>
<div class="a" style="left:532px;top:379px;width:12px;height:11px;background:#a6e0b8"></div>
<div class="a" style="left:549px;top:379px;width:12px;height:11px;background:#4f9a30"></div>
<div class="a" style="left:566px;top:379px;width:12px;height:11px;background:#2a8a4c"></div>
<div class="a" style="left:583px;top:379px;width:12px;height:11px;background:#44b86b"></div>
<div class="a" style="left:600px;top:379px;width:12px;height:11px;background:#6aa93c"></div>
<div class="a" style="left:617px;top:379px;width:12px;height:11px;background:#158a1e"></div>
<div class="a" style="left:512px;top:402px;width:170px;height:1px;background:#dcdcdc"></div>
<div class="a" style="left:524px;top:410px;width:16px;height:16px;border:1px solid #d6d6d6"></div>
<div class="a t" style="left:550px;top:411px;font-size:12px;color:#9a9a9a;">无轮廓(<u>N</u>)</div>
<div class="a" style="left:512px;top:433px;width:170px;height:1px;background:#dcdcdc"></div>
<svg class="a" style="left:523px;top:441px;" width="18" height="17" viewBox="0 0 18 17"><path d="M8.5 1C4 1 1 4 1 7.5C1 10 3 10.5 4.5 10C6 9.5 7 10.5 6 12C5 13.5 6 16 8.5 16C13 16 16.5 12.5 16.5 8.5C16.5 4 13 1 8.5 1Z" fill="#fff" stroke="#333" stroke-width="1"/><circle cx="5" cy="6" r="1.3" fill="#e46c5a"/><circle cx="8.5" cy="4" r="1.3" fill="#f0b83c"/><circle cx="12.5" cy="5.5" r="1.3" fill="#5aa5d8"/><circle cx="13" cy="9.5" r="1.3" fill="#8fbf5a"/><circle cx="10.5" cy="13" r="1.3" fill="#b07cc6"/></svg>
<div class="a t" style="left:549px;top:442px;font-size:12px;color:#333;">其他轮廓颜色(<u>M</u>)...</div>
<svg class="a" style="left:524px;top:471px;" width="17" height="17" viewBox="0 0 17 17"><rect x="0" y="0" width="16" height="1" fill="#2f7ab8"/><rect x="0" y="3" width="16" height="2" fill="#2f7ab8"/><rect x="0" y="7" width="16" height="3.4" fill="#2f7ab8"/><rect x="0" y="12" width="16" height="3.6" fill="#2f7ab8"/></svg>
<div class="a t" style="left:549px;top:472px;font-size:12px;color:#333;">粗细(<u>W</u>)</div>
<svg class="a" style="left:524px;top:503px;" width="17" height="13" viewBox="0 0 17 13"><path d="M0 1.5C2 0.5 4 2.5 6 1.5C8 0.5 10 2.5 12 1.5C13.5 0.8 15 1.5 16 1.5" fill="none" stroke="#b0b0b0" stroke-width="1"/><path d="M0 5C2 4 4 6 6 5C8 4 10 6 12 5C13.5 4.3 15 5 16 5" fill="none" stroke="#b0b0b0" stroke-width="1"/><path d="M0 10L2 8L4 10L6 8L8 10L10 8L12 10L14 8L16 10" fill="none" stroke="#b0b0b0" stroke-width="1"/></svg>
<div class="a t" style="left:549px;top:502px;font-size:12px;color:#a6a6a6;">草绘(<u>K</u>)</div>
<svg class="a" style="left:524px;top:531px;" width="17" height="15" viewBox="0 0 17 15"><path d="M0 1.5H16" stroke="#333"/><path d="M0 5.5H16" stroke="#333" stroke-dasharray="1 1"/><path d="M0 9.5H16" stroke="#333" stroke-dasharray="3 1 1 1"/><path d="M0 13.5H16" stroke="#333" stroke-dasharray="3 1.5"/></svg>
<div class="a t" style="left:549px;top:532px;font-size:12px;color:#333;">虚线(<u>S</u>)</div>
<svg class="a" style="left:523px;top:562px;" width="18" height="16" viewBox="0 0 18 16"><path d="M1 4.5H16 M13 1.5L16 4.5L13 7.5" fill="none" stroke="#b0b0b0"/><path d="M1 12.5H16 M4 9.5L1 12.5L4 15.5 M13 9.5L16 12.5L13 15.5" fill="none" stroke="#b0b0b0"/></svg>
<div class="a t" style="left:549px;top:562px;font-size:12px;color:#a6a6a6;">箭头(<u>R</u>)</div>
<svg class="a" style="left:668px;top:474px;" width="7" height="11" viewBox="0 0 7 11"><path d="M1 1L5.5 5.5L1 10" fill="none" stroke="#444" stroke-width="1.1"/></svg>
<svg class="a" style="left:668px;top:504px;" width="7" height="11" viewBox="0 0 7 11"><path d="M1 1L5.5 5.5L1 10" fill="none" stroke="#b0b0b0" stroke-width="1.1"/></svg>
<svg class="a" style="left:668px;top:534px;" width="7" height="11" viewBox="0 0 7 11"><path d="M1 1L5.5 5.5L1 10" fill="none" stroke="#444" stroke-width="1.1"/></svg>
<svg class="a" style="left:668px;top:564px;" width="7" height="11" viewBox="0 0 7 11"><path d="M1 1L5.5 5.5L1 10" fill="none" stroke="#b0b0b0" stroke-width="1.1"/></svg>
<div class="a" style="left:579px;top:92px;width:19px;height:26px;border:3px solid #e02323;border-radius:2px"></div>
</body></html>
